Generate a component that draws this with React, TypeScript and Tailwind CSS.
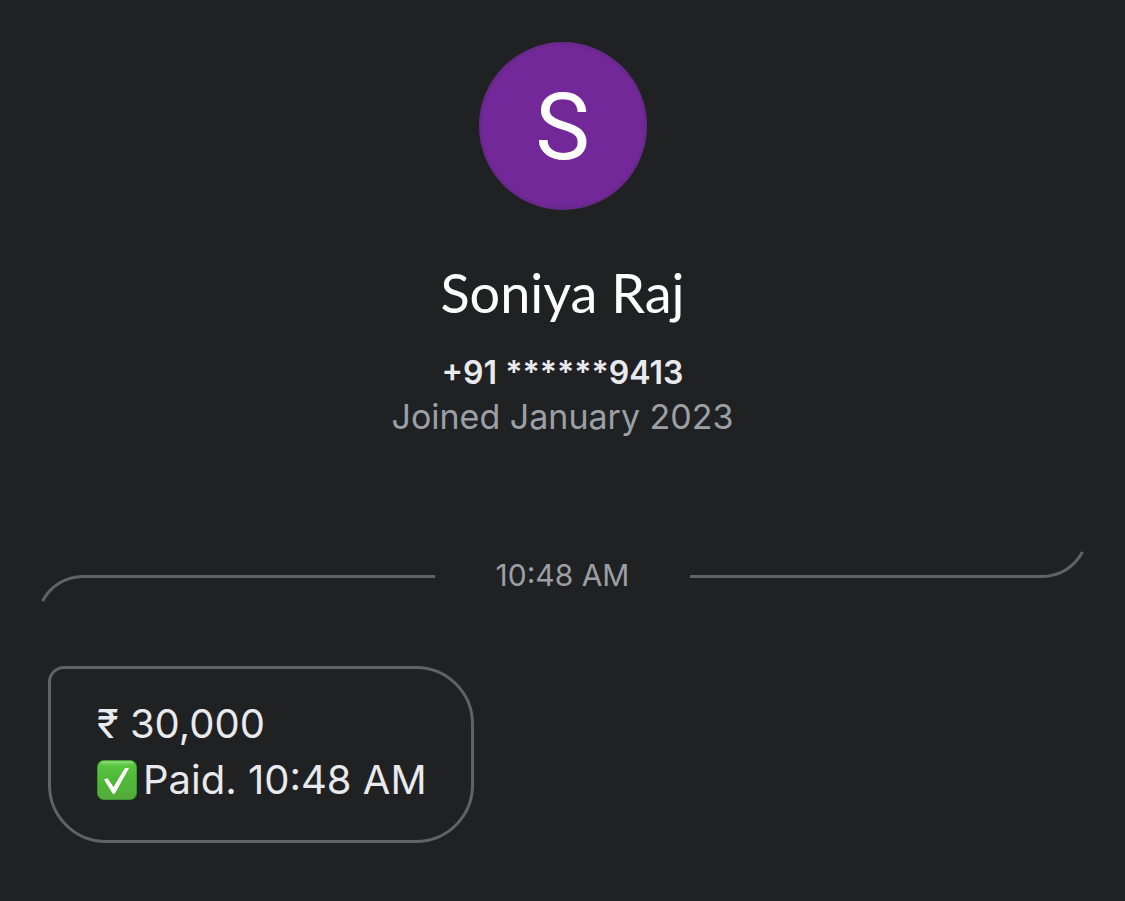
type DividerProps = {
  time: string;
}

type BubbleProps = {
  amount: string;
  status: string;
}

const CheckEmoji = () => {
  return (
    <svg role="img" aria-label="Done" viewBox="0 0 40 40" className="size-10 shrink-0">
      <defs>
        <linearGradient id="tile" x1="0" y1="0" x2="0" y2="1">
          <stop offset="0" stopColor="#4fb53a" />
          <stop offset="0.12" stopColor="#58c440" />
          <stop offset="0.5" stopColor="#4fb937" />
          <stop offset="1" stopColor="#54ab3a" />
        </linearGradient>
        <linearGradient id="shine" x1="0" y1="0" x2="0" y2="1">
          <stop offset="0" stopColor="#a5e88f" />
          <stop offset="1" stopColor="#5cc944" stopOpacity="0" />
        </linearGradient>
      </defs>
      <rect x="0" y="0" width="40" height="40" rx="7" fill="#35902a" />
      <rect x="0.8" y="0.6" width="38.4" height="38.6" rx="6.5" fill="url(#tile)" />
      <rect x="3" y="1.5" width="34" height="5" rx="2.5" fill="url(#shine)" />
      <path d="M7 19.5 L10.500 18.200 L16.500 27 L28 8 L32 8 L17.800 33.800 L15.800 33.800 Z" fill="#fff" />
    </svg>
  )
}

const TimeDivider = ({ time }: DividerProps) => {
  return (
    <div className="flex items-center w-full h-[51px] mt-[114px] px-[41px]">
      <div className="flex flex-1 self-end items-start h-[27px]">
        <svg viewBox="0 0 42 27" fill="none" className="w-[42px] h-[27px] shrink-0">
          <path d="M42 1.5 C24 1.5 9.500 11.500 1.500 26" stroke="#616266" strokeWidth="3" />
        </svg>
        <div className="flex-1 h-[3px] bg-[#616266]" />
      </div>
      <time className="w-[255px] pb-1 text-center text-[30px] leading-9 text-[#9aa0a6]">{time}</time>
      <div className="flex flex-1 self-start items-end h-[27px]">
        <div className="flex-1 h-[3px] bg-[#616266]" />
        <svg viewBox="0 0 42 27" fill="none" className="w-[42px] h-[27px] shrink-0">
          <path d="M0 25.5 C18 25.5 32.500 15.500 40.500 1" stroke="#616266" strokeWidth="3" />
        </svg>
      </div>
    </div>
  )
}

const PaymentBubble = ({ amount, status }: BubbleProps) => {
  return (
    <div className="self-start ml-12 mt-16 pl-[46px] pr-11 pt-[27px] pb-8 border-3 border-[#616266] rounded-[58px] rounded-tl-[16px] text-[40px] leading-[56px] text-[#e8eaed]">
      <p>{amount}</p>
      <p className="flex items-center gap-1.5">
        <CheckEmoji />
        {status}
      </p>
    </div>
  )
}

const App = () => {
  return (
    <main className="flex flex-col items-center min-h-screen pt-[42px] pb-14 bg-[#202123] font-['Inter','Liberation_Sans',sans-serif]">
      <div className="flex items-center justify-center size-[168px] pt-1 rounded-full border-3 border-[#69288c] bg-[#722898] text-white text-[92px] leading-none font-['Roboto',sans-serif]">
        S
      </div>
      <h1 className="mt-[51px] text-[54px] leading-[64px] text-white font-['Lato',sans-serif]">Soniya Raj</h1>
      <p className="mt-7 text-[32px] leading-10 font-semibold text-[#e8eaed]">+91 ******9413</p>
      <p className="mt-1 text-[34px] leading-10 text-[#9aa0a6]">Joined January 2023</p>
      <TimeDivider time="10:48 AM" />
      <PaymentBubble amount="₹ 30,000" status="Paid. 10:48 AM" />
    </main>
  )
}

export default App
